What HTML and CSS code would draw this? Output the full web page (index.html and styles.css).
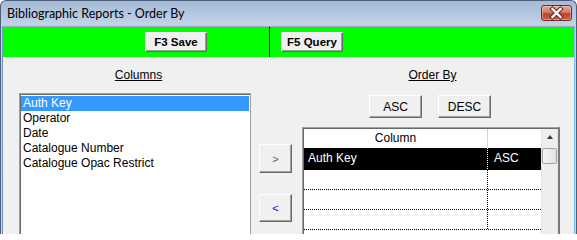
FILE: index.html
```html
<!DOCTYPE html>
<html>
<head>
<meta charset="utf-8">
<link rel="stylesheet" href="styles.css">
</head>
<body>
<div class="window">
  <div class="titlebar">
    <span class="title">Bibliographic Reports - Order By</span>
    <div class="close">
      <svg width="29" height="14" viewBox="0 0 29 14">
        <path d="M10.5 3 L18.5 11 M18.5 3 L10.5 11" stroke="#6a2a22" stroke-width="4.4" stroke-linecap="square" fill="none"/>
        <path d="M10.5 3 L18.5 11 M18.5 3 L10.5 11" stroke="#ffffff" stroke-width="2.4" stroke-linecap="square" fill="none"/>
      </svg>
    </div>
  </div>
  <div class="client">
    <div class="toolbar">
      <div class="btn tbtn">F3 Save</div>
      <div class="sep"></div>
      <div class="btn tbtn">F5 Query</div>
    </div>
    <div class="content">
      <div class="col-left">
        <div class="label label-left">Columns</div>
        <div class="listbox">
          <div class="item sel">Auth Key</div>
          <div class="item">Operator</div>
          <div class="item">Date</div>
          <div class="item">Catalogue Number</div>
          <div class="item">Catalogue Opac Restrict</div>
        </div>
      </div>
      <div class="col-mid">
        <div class="btn move move-add">&gt;</div>
        <div class="btn move move-remove">&lt;</div>
      </div>
      <div class="col-right">
        <div class="label label-right">Order By</div>
        <div class="sortbtns">
          <div class="btn sbtn">ASC</div>
          <div class="btn sbtn">DESC</div>
        </div>
        <div class="grid">
          <div class="grid-table">
            <div class="ghead">
              <div class="c1">Column</div>
              <div class="c2"></div>
            </div>
            <div class="grow gsel">
              <div class="c1">Auth Key</div>
              <div class="c2">ASC</div>
            </div>
            <div class="grow">
              <div class="c1"></div>
              <div class="c2"></div>
            </div>
            <div class="grow">
              <div class="c1"></div>
              <div class="c2"></div>
            </div>
            <div class="grow">
              <div class="c1"></div>
              <div class="c2"></div>
            </div>
          </div>
          <div class="vscroll">
            <div class="sarrow"><div class="tri"></div></div>
            <div class="thumb"></div>
          </div>
        </div>
      </div>
    </div>
  </div>
</div>
</body>
</html>
```
FILE: styles.css
```css
html, body {
  margin: 0;
  padding: 0;
  width: 577px;
  height: 234px;
  overflow: hidden;
  background: #ffffff;
}

body {
  font-family: "Liberation Sans", Arial, sans-serif;
  font-size: 12px;
  color: #000;
}

.window {
  box-sizing: border-box;
  width: 577px;
  height: 234px;
  overflow: hidden;
  border: 1px solid #4c607c;
  border-bottom: none;
  border-radius: 6px 6px 0 0;
  background: linear-gradient(to bottom, #a6bad5 0px, #c3d4ea 25px, #c4d7ee 100%);
  display: flex;
  flex-direction: column;
}

.titlebar {
  flex: none;
  height: 25px;
  display: flex;
  justify-content: space-between;
  align-items: flex-start;
}

.title {
  font-family: Lato, "Noto Sans", sans-serif;
  font-size: 12.5px;
  line-height: 25px;
  padding-left: 6px;
  color: #000;
}

.close {
  box-sizing: border-box;
  width: 31px;
  height: 16px;
  margin-top: 4px;
  margin-right: 4px;
  border: 1px solid #6b2c25;
  border-radius: 3px;
  background: linear-gradient(to bottom, #e6aa9c 0%, #d47a68 45%, #c1412f 55%, #c9604a 100%);
  box-shadow: inset 0 0 0 1px rgba(255, 220, 210, 0.45);
  display: flex;
}

.close svg {
  display: block;
}

.client {
  flex: 1;
  min-height: 0;
  overflow: hidden;
  margin: 0 1px;
  border-top: 1px solid #9aa8bb;
  border-left: 1px solid #6f93c4;
  border-right: 1px solid #7fbbe6;
  background: #f0f0f0;
}

.btn {
  box-sizing: border-box;
  background: #f0f0f0;
  border: 1px solid;
  border-color: #ffffff #696969 #696969 #ffffff;
  box-shadow: inset -1px -1px 0 #a0a0a0;
  display: flex;
  align-items: center;
  justify-content: center;
  cursor: default;
}

.toolbar {
  box-sizing: border-box;
  height: 30px;
  background: #00ff00;
  display: flex;
  align-items: flex-start;
  padding-top: 5px;
  padding-left: 142px;
}

.tbtn {
  width: 62px;
  height: 20px;
  font-weight: bold;
  font-size: 11.5px;
}

.sep {
  width: 1px;
  height: 30px;
  margin-top: -5px;
  margin-left: 62px;
  margin-right: 11px;
  background: #000;
}

.content {
  display: flex;
  align-items: flex-start;
  padding-left: 16px;
}

.label {
  margin-top: 11px;
  height: 15px;
  line-height: 15px;
  text-align: center;
  text-decoration: underline;
}

.label-left {
  padding-left: 7px;
}

.label-right {
  padding-left: 3px;
}

.col-left {
  width: 232px;
}

.listbox {
  box-sizing: border-box;
  margin-top: 10px;
  height: 160px;
  background: #fff;
  border: 1px solid #a0a0a0;
  box-shadow: inset 1px 1px 0 #696969;
  padding: 2px 1px 0 1px;
}

.item {
  height: 15px;
  line-height: 15px;
  padding-left: 2px;
  white-space: nowrap;
}

.item.sel {
  background: #3399ff;
  color: #fff;
}

.col-mid {
  width: 33px;
  margin-left: 8px;
  margin-top: 87px;
  display: flex;
  flex-direction: column;
}

.move {
  height: 29px;
  font-size: 11px;
}

.move-add {
  color: #5a5a5a;
  margin-bottom: 21px;
}

.move-remove {
  color: #0000ff;
  height: 28px;
}

.col-right {
  width: 258px;
  margin-left: 10px;
}

.sortbtns {
  margin-top: 12px;
  display: flex;
  justify-content: center;
  gap: 16px;
  padding-right: 2px;
}

.sbtn {
  width: 53px;
  height: 23px;
}

.grid {
  box-sizing: border-box;
  margin-top: 9px;
  height: 130px;
  background: #fff;
  border: 1px solid;
  border-color: #a0a0a0 #7a7a7a #a0a0a0 #a0a0a0;
  border-right-width: 2px;
  padding: 1px 0 0 1px;
  box-shadow: inset 1px 1px 0 #696969;
  display: flex;
}

.grid-table {
  width: 237px;
  background: #fff;
}

.ghead {
  display: flex;
  height: 19px;
  line-height: 19px;
  background: #fff;
}

.ghead .c1 {
  box-sizing: border-box;
  width: 184px;
  text-align: center;
  border-right: 1px solid #d5d5d5;
}

.ghead .c2 {
  flex: 1;
}

.grow {
  display: flex;
  box-sizing: border-box;
  height: 20px;
  border-bottom: 1px dotted #000;
}

.grow .c1 {
  box-sizing: border-box;
  width: 184px;
  border-right: 1px dotted #000;
  padding-left: 4px;
  line-height: 19px;
}

.grow .c2 {
  flex: 1;
  padding-left: 6px;
  line-height: 19px;
}

.grow.gsel {
  height: 22px;
  background: #000;
  color: #fff;
}

.grow.gsel .c1 {
  border-right-color: #fff;
  line-height: 21px;
}

.grow.gsel .c2 {
  line-height: 21px;
}

.vscroll {
  box-sizing: border-box;
  width: 17px;
  background: #eeeeee;
  border-left: 1px solid #e3e3e3;
  border-right: 1px solid #e3e3e3;
  display: flex;
  flex-direction: column;
  align-items: center;
}

.sarrow {
  height: 18px;
  width: 15px;
  display: flex;
  align-items: center;
  justify-content: center;
}

.tri {
  width: 0;
  height: 0;
  border-left: 3.5px solid transparent;
  border-right: 3.5px solid transparent;
  border-bottom: 4px solid #3c3c3c;
  margin-top: -2px;
}

.thumb {
  box-sizing: border-box;
  width: 15px;
  height: 16px;
  margin-top: 1px;
  border: 1px solid #a3a3a3;
  border-radius: 2px;
  background: linear-gradient(to right, #f5f5f5, #e2e2e2);
}
```
